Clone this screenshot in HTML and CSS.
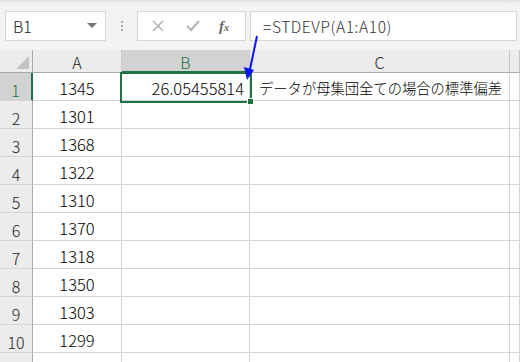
FILE: index.html
```html
<!DOCTYPE html>
<html lang="ja">
<head>
    <meta charset="UTF-8">
    <title>STDEVP</title>
    <link rel="stylesheet" href="styles.css">
</head>
<body>

<div class="toolbar">
    <div class="name-box">
        <span class="name-text">B1</span>
        <span class="name-drop"></span>
    </div>
    <div class="grip"><i></i><i></i><i></i></div>
    <div class="fx-buttons">
        <svg class="btn-cancel" width="14" height="14" viewBox="0 0 14 14"><path d="M2 2 L12 12 M12 2 L2 12" stroke="#b4b4b4" stroke-width="1.6" fill="none"/></svg>
        <svg class="btn-ok" width="16" height="14" viewBox="0 0 16 14"><path d="M2 7 L6 11 L14 2" stroke="#b4b4b4" stroke-width="2" fill="none"/></svg>
        <span class="btn-fx">f<sub>x</sub></span>
    </div>
    <div class="formula">=STDEVP(A1:A10)</div>
</div>

<div class="sheet">
    <div class="grid">
        <div class="corner"><span class="corner-tri"></span></div>
        <div class="col-head">A</div>
        <div class="col-head active">B</div>
        <div class="col-head">C</div>
        <div class="col-head last"></div>

        <div class="row-head active">1</div><div class="cell num">1345</div><div class="cell right">26.05455814</div><div class="cell note">データが母集団全ての場合の標準偏差</div><div class="cell"></div>
        <div class="row-head">2</div><div class="cell num">1301</div><div class="cell"></div><div class="cell"></div><div class="cell"></div>
        <div class="row-head">3</div><div class="cell num">1368</div><div class="cell"></div><div class="cell"></div><div class="cell"></div>
        <div class="row-head">4</div><div class="cell num">1322</div><div class="cell"></div><div class="cell"></div><div class="cell"></div>
        <div class="row-head">5</div><div class="cell num">1310</div><div class="cell"></div><div class="cell"></div><div class="cell"></div>
        <div class="row-head">6</div><div class="cell num">1370</div><div class="cell"></div><div class="cell"></div><div class="cell"></div>
        <div class="row-head">7</div><div class="cell num">1318</div><div class="cell"></div><div class="cell"></div><div class="cell"></div>
        <div class="row-head">8</div><div class="cell num">1350</div><div class="cell"></div><div class="cell"></div><div class="cell"></div>
        <div class="row-head">9</div><div class="cell num">1303</div><div class="cell"></div><div class="cell"></div><div class="cell"></div>
        <div class="row-head">10</div><div class="cell num">1299</div><div class="cell"></div><div class="cell"></div><div class="cell"></div>
        <div class="row-head">11</div><div class="cell"></div><div class="cell"></div><div class="cell"></div><div class="cell"></div>
    </div>

    <!-- selection frame over B1 -->
    <div class="selection"><span class="handle"></span></div>

    <!-- annotation arrow from the formula to B1 -->
    <svg class="arrow" width="30" height="50" viewBox="0 0 30 50">
        <path d="M17 2 L9 40" stroke="#0a14f0" stroke-width="2" fill="none"/>
        <path d="M4 33 L7 46 L14 36 Z" fill="#0a14f0"/>
    </svg>
</div>

</body>
</html>
```

FILE: styles.css
```css
body {
    margin: 0;
    width: 520px;
    height: 362px;
    overflow: hidden;
    background: #f3f3f3;
    font-family: "Noto Sans CJK JP", "Liberation Sans", sans-serif;
    font-weight: 300;
    color: #000;
}
.toolbar {
    height: 50px;
    display: flex;
    align-items: flex-start;
    padding-top: 11px;
    box-sizing: border-box;
    background: linear-gradient(#dedede 0, #efefef 3px, #f3f3f3 6px);
}
.name-box {
    width: 101px;
    height: 30px;
    margin-left: 5px;
    background: #fff;
    border: 1px solid #d6d6d6;
    box-sizing: border-box;
    display: flex;
    align-items: center;
    justify-content: space-between;
    padding: 0 8px 0 7px;
}
.name-text {
    font-size: 16px;
    color: #222;
}
.name-drop {
    width: 0;
    height: 0;
    border-left: 5px solid transparent;
    border-right: 5px solid transparent;
    border-top: 5px solid #777;
    margin-bottom: 2px;
}
.grip {
    width: 31px;
    height: 30px;
    display: flex;
    flex-direction: column;
    align-items: center;
    justify-content: center;
    gap: 2px;
}
.grip i {
    width: 2px;
    height: 2px;
    background: #a8a8a8;
}
.fx-buttons {
    width: 109px;
    height: 30px;
    background: #fff;
    border: 1px solid #d6d6d6;
    box-sizing: border-box;
    display: flex;
    align-items: center;
    padding-left: 13px;
    gap: 20px;
}
.btn-fx {
    font-family: "Liberation Serif", serif;
    font-style: italic;
    font-weight: bold;
    font-size: 15px;
    color: #666;
    margin-left: -2px;
}
.btn-fx sub {
    font-size: 10px;
    vertical-align: 0;
}
.formula {
    flex: 1;
    height: 30px;
    margin-left: 4px;
    margin-right: 3px;
    background: #fff;
    border: 1px solid #d6d6d6;
    box-sizing: border-box;
    font-size: 15.5px;
    letter-spacing: 0.6px;
    color: #333;
    padding-left: 12px;
    line-height: 28px;
}
.sheet {
    position: relative;
}
.grid {
    display: grid;
    grid-template-columns: 33px 89px 128px 260px 10px;
    grid-template-rows: 23px repeat(11, 28px);
    background: #fff;
}
.corner,
.col-head,
.row-head {
    background: #ececec;
    box-sizing: border-box;
    color: #222;
}
.corner {
    border-right: 1px solid #ababab;
    border-bottom: 1px solid #ababab;
    position: relative;
}
.corner-tri {
    position: absolute;
    right: 3px;
    bottom: 3px;
    width: 0;
    height: 0;
    border-left: 13px solid transparent;
    border-bottom: 13px solid #c2c2c2;
}
.col-head {
    border-right: 1px solid #c8c8c8;
    border-bottom: 1px solid #ababab;
    text-align: center;
    font-size: 16px;
    line-height: 24px;
}
.col-head.active {
    background: #d2d2d2;
    color: #217346;
    border-bottom: 2px solid #217346;
}
.row-head {
    border-right: 1px solid #ababab;
    border-bottom: 1px solid #d4d4d4;
    text-align: center;
    font-size: 16px;
    line-height: 30px;
    padding-top: 2px;
}
.row-head.active {
    background: #d2d2d2;
    color: #217346;
    border-right: 2px solid #217346;
}
.cell {
    border-right: 1px solid #d4d4d4;
    border-bottom: 1px solid #d4d4d4;
    box-sizing: border-box;
    font-size: 16.5px;
    line-height: 30px;
    white-space: nowrap;
}
.num {
    text-align: center;
}
.right {
    text-align: right;
    padding-right: 5px;
}
.note {
    font-size: 14.3px;
    padding-left: 9px;
}
.selection {
    position: absolute;
    left: 120px;
    top: 22px;
    width: 132px;
    height: 31px;
    border: 2px solid #217346;
    box-sizing: border-box;
}
.handle {
    position: absolute;
    right: -4px;
    bottom: -4px;
    width: 5px;
    height: 5px;
    background: #217346;
    border: 1px solid #fff;
}
.arrow {
    position: absolute;
    left: 240px;
    top: -16px;
}
```
